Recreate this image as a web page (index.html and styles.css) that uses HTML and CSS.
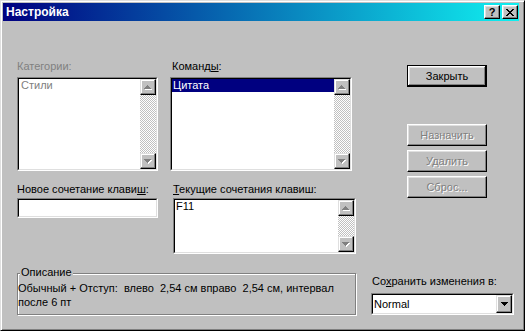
FILE: index.html
```html
<!DOCTYPE html>
<html lang="ru">
<head>
<meta charset="utf-8">
<title>Настройка</title>
<link rel="stylesheet" href="styles.css">
</head>
<body>
<div class="dialog">
  <div class="titlebar">
    <span class="title">Настройка</span>
    <div class="tbtns">
      <span class="tbtn help">?</span>
      <span class="tbtn"><svg width="8" height="7" viewBox="0 0 8 7" shape-rendering="crispEdges"><path fill="#000" d="M0 0h2v1H0zM6 0h2v1H6zM1 1h2v1H1zM5 1h2v1H5zM2 2h4v1H2zM3 3h2v1H3zM2 4h4v1H2zM1 5h2v1H1zM5 5h2v1H5zM0 6h2v1H0zM6 6h2v1H6z"/></svg></span>
    </div>
  </div>
  <div class="body">
    <div class="top">
      <div class="grid">
        <div class="cell">
          <div class="label disabled mb4">Категории:</div>
          <div class="sunken lb-cat">
            <div class="in list">
              <div class="items"><div class="item gray">Стили</div></div>
              <div class="vscroll">
                <span class="sbtn"><svg width="8" height="5" viewBox="0 0 8 5" shape-rendering="crispEdges"><path fill="#fff" d="M4 1h1v1H4zM3 2h3v1H3zM2 3h5v1H2zM1 4h7v1H1z"/><path fill="#808080" d="M3 0h1v1H3zM2 1h3v1H2zM1 2h5v1H1zM0 3h7v1H0z"/></svg></span>
                <span class="track"></span>
                <span class="sbtn"><svg width="8" height="5" viewBox="0 0 8 5" shape-rendering="crispEdges"><path fill="#fff" d="M1 1h7v1H1zM2 2h5v1H2zM3 3h3v1H3zM4 4h1v1H4z"/><path fill="#808080" d="M0 0h7v1H0zM1 1h5v1H1zM2 2h3v1H2zM3 3h1v1H3z"/></svg></span>
              </div>
            </div>
          </div>
        </div>
        <div class="cell">
          <div class="label mb4 ml2">Команд<u>ы</u>:</div>
          <div class="sunken lb-cmd">
            <div class="in list">
              <div class="items"><div class="item sel">Цитата</div></div>
              <div class="vscroll">
                <span class="sbtn"><svg width="8" height="5" viewBox="0 0 8 5" shape-rendering="crispEdges"><path fill="#fff" d="M4 1h1v1H4zM3 2h3v1H3zM2 3h5v1H2zM1 4h7v1H1z"/><path fill="#808080" d="M3 0h1v1H3zM2 1h3v1H2zM1 2h5v1H1zM0 3h7v1H0z"/></svg></span>
                <span class="track"></span>
                <span class="sbtn"><svg width="8" height="5" viewBox="0 0 8 5" shape-rendering="crispEdges"><path fill="#fff" d="M1 1h7v1H1zM2 2h5v1H2zM3 3h3v1H3zM4 4h1v1H4z"/><path fill="#808080" d="M0 0h7v1H0zM1 1h5v1H1zM2 2h3v1H2zM3 3h1v1H3z"/></svg></span>
              </div>
            </div>
          </div>
        </div>
        <div class="cell">
          <div class="label mb2">Новое сочетание клави<u>ш</u>:</div>
          <div class="sunken inp"><div class="in white"></div></div>
        </div>
        <div class="cell shift3">
          <div class="label mb2"><u>Т</u>екущие сочетания клавиш:</div>
          <div class="sunken lb-keys">
            <div class="in list">
              <div class="items"><div class="item">F11</div></div>
              <div class="vscroll">
                <span class="sbtn"><svg width="8" height="5" viewBox="0 0 8 5" shape-rendering="crispEdges"><path fill="#fff" d="M4 1h1v1H4zM3 2h3v1H3zM2 3h5v1H2zM1 4h7v1H1z"/><path fill="#808080" d="M3 0h1v1H3zM2 1h3v1H2zM1 2h5v1H1zM0 3h7v1H0z"/></svg></span>
                <span class="track"></span>
                <span class="sbtn"><svg width="8" height="5" viewBox="0 0 8 5" shape-rendering="crispEdges"><path fill="#fff" d="M1 1h7v1H1zM2 2h5v1H2zM3 3h3v1H3zM4 4h1v1H4z"/><path fill="#808080" d="M0 0h7v1H0zM1 1h5v1H1zM2 2h3v1H2zM3 3h1v1H3z"/></svg></span>
              </div>
            </div>
          </div>
        </div>
      </div>
      <div class="buttons">
        <span class="btn default">Закрыть</span>
        <span class="btn dis first">Назначить</span>
        <span class="btn dis">Удалить</span>
        <span class="btn dis">Сброс...</span>
      </div>
    </div>
    <div class="bottom">
      <div class="group">
        <span class="legend">Описание</span>
        <div class="desc">Обычный + Отступ:&nbsp; влево&nbsp; 2,54 см вправо&nbsp; 2,54 см, интервал<br>после 6 пт</div>
      </div>
      <div class="save">
        <div class="label mb5">Со<u>х</u>ранить изменения в:</div>
        <div class="sunken combo">
          <div class="in white cbrow">
            <span class="cbtext">Normal</span>
            <span class="sbtn cbbtn"><svg width="7" height="4" viewBox="0 0 7 4" shape-rendering="crispEdges"><path fill="#000" d="M0 0h7v1H0zM1 1h5v1H1zM2 2h3v1H2zM3 3h1v1H3z"/></svg></span>
          </div>
        </div>
      </div>
    </div>
  </div>
</div>
</body>
</html>
```

FILE: styles.css
```css
* { box-sizing: border-box; }
html, body { margin: 0; padding: 0; background: #c0c0c0; }
body {
  font-family: "Liberation Sans", Arial, sans-serif;
  font-size: 11px;
  line-height: 13px;
  color: #000;
}
.dialog {
  width: 525px;
  height: 331px;
  border: 1px solid;
  border-color: #dfdfdf #000 #000 #dfdfdf;
  box-shadow: inset 1px 1px #fff, inset -1px -1px #808080;
  padding: 2px 5px 2px 2px;
  background: #c0c0c0;
  display: flex;
  flex-direction: column;
}
.titlebar {
  height: 18px;
  flex: none;
  display: flex;
  align-items: center;
  padding: 0 1px 0 3px;
  background: linear-gradient(90deg, #000080 0%, #10f0f0 100%);
}
.title {
  color: #fff;
  font-weight: bold;
  font-size: 12px;
  line-height: 18px;
}
.tbtns { margin-left: auto; display: flex; gap: 2px; }
.tbtn {
  width: 16px;
  height: 14px;
  display: flex;
  align-items: center;
  justify-content: center;
  background: #c0c0c0;
  border: 1px solid;
  border-color: #fff #000 #000 #fff;
  box-shadow: inset -1px -1px #808080, inset 1px 1px #dfdfdf;
}
.tbtn.help { font-weight: bold; font-size: 11px; line-height: 1; padding-top: 1px; }
.body { flex: 1; padding: 39px 0 0 14px; }
.top { display: flex; align-items: flex-start; }
.grid {
  display: grid;
  grid-template-columns: 141px 186px;
  column-gap: 12px;
  row-gap: 12px;
}
.label { height: 13px; white-space: nowrap; }
.label.disabled { color: #808080; }
.mb4 { margin-bottom: 4px; }
.mb2 { margin-bottom: 2px; }
.mb5 { margin-bottom: 5px; }
.ml2 { margin-left: 2px; }
.shift3 { padding-left: 3px; }
.shift3 .label { padding-left: 0; }
.sunken {
  border: 1px solid;
  border-color: #808080 #fff #fff #808080;
}
.sunken > .in {
  height: 100%;
  border: 1px solid;
  border-color: #000 #dfdfdf #dfdfdf #000;
}
.white { background: #fff; }
.list { display: flex; background: #fff; }
.items { flex: 1; }
.item { height: 13px; line-height: 13px; padding-left: 1px; white-space: nowrap; }
.item.gray { color: #808080; padding-left: 2px; }
.item.sel { background: #000080; color: #fff; }
.lb-cat { width: 141px; height: 94px; }
.lb-cmd { width: 182px; height: 94px; }
.lb-keys { width: 183px; height: 56px; }
.inp { width: 141px; height: 20px; }
.vscroll { width: 16px; display: flex; flex-direction: column; }
.sbtn {
  width: 16px;
  height: 16px;
  flex: none;
  display: flex;
  align-items: center;
  justify-content: center;
  background: #c0c0c0;
  border: 1px solid;
  border-color: #dfdfdf #000 #000 #dfdfdf;
  box-shadow: inset -1px -1px #808080, inset 1px 1px #fff;
}
.track {
  flex: 1;
  background: repeating-conic-gradient(#c0c0c0 0 25%, #fff 0 50%) 0 0 / 2px 2px;
}
.buttons {
  margin-left: 51px;
  margin-top: 5px;
  width: 80px;
  display: flex;
  flex-direction: column;
  gap: 4px;
}
.btn {
  height: 22px;
  display: flex;
  align-items: center;
  justify-content: center;
  background: #c0c0c0;
  border: 1px solid;
  border-color: #fff #000 #000 #fff;
  box-shadow: inset -1px -1px #808080, inset 1px 1px #dfdfdf;
}
.btn.default {
  border-color: #000;
  box-shadow: inset -1px -1px #000, inset 1px 1px #fff, inset -2px -2px #808080, inset 2px 2px #dfdfdf;
}
.btn.first { margin-top: 33px; }
.btn.dis { color: #808080; text-shadow: 1px 1px #fff; }
.bottom { display: flex; align-items: flex-start; margin-top: 12px; }
.group {
  margin-top: 7px;
  width: 339px;
  height: 42px;
  border: 1px solid #808080;
  box-shadow: inset 1px 1px #fff, 1px 1px #fff;
  display: flex;
  flex-direction: column;
}
.legend {
  align-self: flex-start;
  margin: -8px 0 0 2px;
  padding: 0 1px;
  background: #c0c0c0;
  line-height: 13px;
  height: 13px;
}
.desc { margin-top: 2px; line-height: 14px; white-space: nowrap; }
.save { margin-left: 15px; margin-top: 9px; }
.save .label { padding-left: 1px; }
.combo { width: 143px; height: 22px; }
.cbrow { display: flex; }
.cbtext { flex: 1; padding-left: 1px; line-height: 18px; }
.cbbtn { height: 18px; }
```
